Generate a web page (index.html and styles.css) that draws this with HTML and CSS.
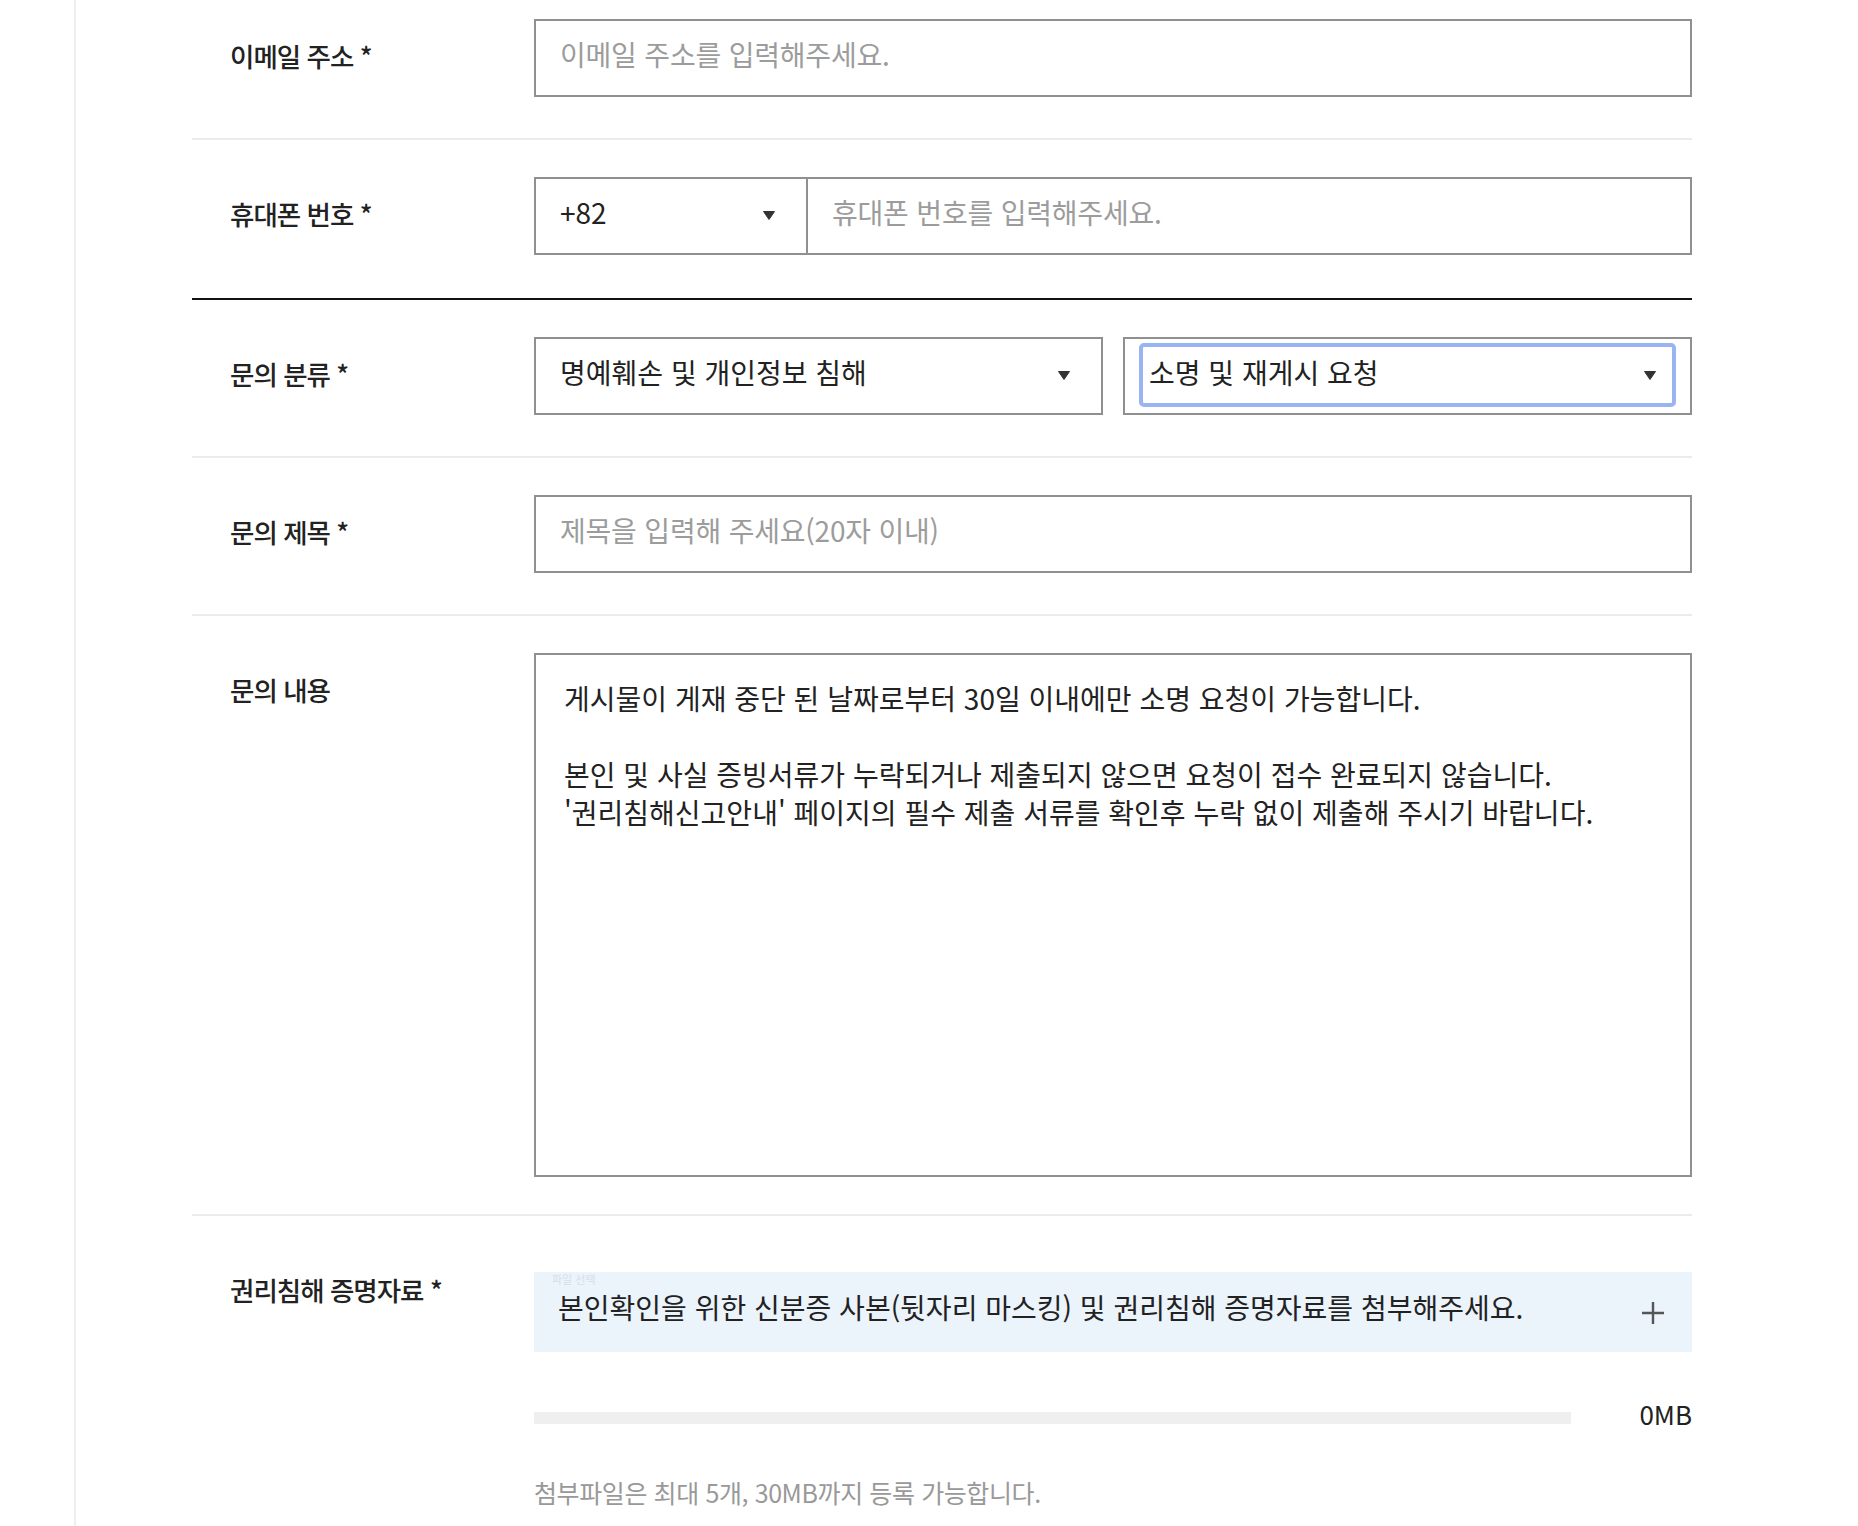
FILE: index.html
```html
<!DOCTYPE html>
<html lang="ko">
<head>
<meta charset="utf-8">
<title>문의하기</title>
<link rel="stylesheet" href="styles.css">
</head>
<body>
<div class="page">
  <form class="form">
    <div class="row row-first">
      <label class="label">이메일 주소 *</label>
      <div class="field">
        <input class="input" type="text" placeholder="이메일 주소를 입력해주세요.">
      </div>
    </div>

    <div class="row row-phone">
      <label class="label">휴대폰 번호 *</label>
      <div class="field phone">
        <div class="select select-code">
          <span>+82</span>
          <svg class="arrow" width="12" height="9" viewBox="0 0 12 9"><path d="M0.5 0.5 H11.5 L6 8.5 Z" fill="#333" stroke="#333" stroke-linejoin="round"/></svg>
        </div>
        <input class="input input-phone" type="text" placeholder="휴대폰 번호를 입력해주세요.">
      </div>
    </div>

    <div class="row">
      <label class="label">문의 분류 *</label>
      <div class="field category">
        <div class="select">
          <span>명예훼손 및 개인정보 침해</span>
          <svg class="arrow" width="12" height="9" viewBox="0 0 12 9"><path d="M0.5 0.5 H11.5 L6 8.5 Z" fill="#333" stroke="#333" stroke-linejoin="round"/></svg>
        </div>
        <div class="select-wrap">
          <div class="select-inner is-focused">
            <span>소명 및 재게시 요청</span>
            <svg class="arrow" width="12" height="9" viewBox="0 0 12 9"><path d="M0.5 0.5 H11.5 L6 8.5 Z" fill="#333" stroke="#333" stroke-linejoin="round"/></svg>
          </div>
        </div>
      </div>
    </div>

    <div class="row">
      <label class="label">문의 제목 *</label>
      <div class="field">
        <input class="input" type="text" placeholder="제목을 입력해 주세요(20자 이내)">
      </div>
    </div>

    <div class="row row-content">
      <label class="label">문의 내용</label>
      <div class="field">
        <textarea class="textarea">게시물이 게재 중단 된 날짜로부터 30일 이내에만 소명 요청이 가능합니다.

본인 및 사실 증빙서류가 누락되거나 제출되지 않으면 요청이 접수 완료되지 않습니다.
'권리침해신고안내' 페이지의 필수 제출 서류를 확인후 누락 없이 제출해 주시기 바랍니다.</textarea>
      </div>
    </div>

    <div class="row row-attach">
      <label class="label">권리침해 증명자료 *</label>
      <div class="field attach">
        <div class="upload">
          <span class="file-hint">파일 선택</span>
          <span class="upload-text">본인확인을 위한 신분증 사본(뒷자리 마스킹) 및 권리침해 증명자료를 첨부해주세요.</span>
          <svg class="plus" width="22" height="22" viewBox="0 0 22 22"><path d="M11 0 V22 M0 11 H22" stroke="#555" stroke-width="2.4" fill="none"/></svg>
        </div>
        <div class="progress">
          <div class="bar"></div>
          <span class="size">0MB</span>
        </div>
        <p class="note">첨부파일은 최대 5개, 30MB까지 등록 가능합니다.</p>
      </div>
    </div>
  </form>
</div>
</body>
</html>
```

FILE: styles.css
```css
* {
  box-sizing: border-box;
}

html, body {
  margin: 0;
  padding: 0;
  background: #fff;
}

body {
  font-family: "Noto Sans CJK KR", "Noto Sans", sans-serif;
  color: #222;
  overflow: hidden;
}

.page {
  margin-left: 74px;
  border-left: 2px solid #efefef;
  padding-left: 116px;
  min-height: 1526px;
}

.form {
  width: 1500px;
}

.row {
  display: grid;
  grid-template-columns: 342px 1158px;
  padding: 37px 0 41px;
  border-bottom: 2px solid #ebebeb;
}

.row-first {
  padding-top: 19px;
}

.row-phone {
  padding-bottom: 43px;
  border-bottom-color: #111;
}

.row-content {
  padding-bottom: 37px;
}

.row-attach {
  border-bottom: none;
  padding-bottom: 0;
}

.label {
  display: block;
  padding-left: 38px;
  margin-top: 22px;
  line-height: 30px;
  font-size: 26.5px;
  font-weight: 500;
  letter-spacing: -1px;
  color: #222;
}

.input {
  display: block;
  width: 100%;
  height: 78px;
  border: 2px solid #909090;
  border-radius: 0;
  padding: 0 24px 9px;
  font-family: inherit;
  font-size: 28px;
  color: #222;
  background: #fff;
  outline: none;
}

.input::placeholder {
  color: #9c9c9c;
  letter-spacing: -0.2px;
}

.phone {
  display: flex;
}

.select {
  height: 78px;
  border: 2px solid #909090;
  padding: 0 31px 8px 24px;
  display: flex;
  align-items: center;
  justify-content: space-between;
  font-size: 28px;
  color: #222;
  background: #fff;
}

.select .arrow {
  margin-top: 6px;
}

.select-code {
  width: 274px;
  flex: none;
}

.input-phone {
  flex: 1;
  border-left: none;
}

.category {
  display: grid;
  grid-template-columns: 1fr 1fr;
  column-gap: 20px;
}

.select-wrap {
  height: 78px;
  border: 2px solid #909090;
  padding: 4px 14px 6px;
}

.select-inner {
  height: 100%;
  display: flex;
  align-items: center;
  justify-content: space-between;
  padding: 0 16px 6px 6px;
  font-size: 28px;
  color: #222;
}

.select-inner .arrow {
  margin-top: 6px;
}

.is-focused {
  border: 4px solid #98b4f2;
  border-radius: 5px;
}

.arrow {
  display: block;
  flex: none;
}

.textarea {
  display: block;
  width: 100%;
  height: 524px;
  border: 2px solid #909090;
  border-radius: 0;
  padding: 24px 28px;
  font-family: inherit;
  font-size: 28px;
  line-height: 38px;
  color: #222;
  resize: none;
  outline: none;
  overflow: hidden;
}

.attach {
  padding-top: 19px;
}

.upload {
  position: relative;
  height: 80px;
  background: #ebf3fb;
  padding: 21px 28px 0 24px;
  display: flex;
  justify-content: space-between;
  align-items: flex-start;
}

.file-hint {
  position: absolute;
  left: 18px;
  top: 0;
  font-size: 11px;
  line-height: 14px;
  color: #d6dfea;
}

.upload-text {
  font-size: 28px;
  line-height: 28px;
  color: #222;
}

.plus {
  display: block;
  margin-top: 9px;
}

.progress {
  margin-top: 51px;
  display: grid;
  grid-template-columns: 1fr auto;
  column-gap: 68px;
  align-items: center;
  height: 30px;
}

.bar {
  height: 12px;
  background: #efefef;
}

.size {
  font-size: 26px;
  line-height: 30px;
  margin-top: -8px;
  color: #222;
}

.note {
  margin: 44px 0 0;
  font-size: 25px;
  line-height: 30px;
  letter-spacing: -0.4px;
  color: #999;
}
```
